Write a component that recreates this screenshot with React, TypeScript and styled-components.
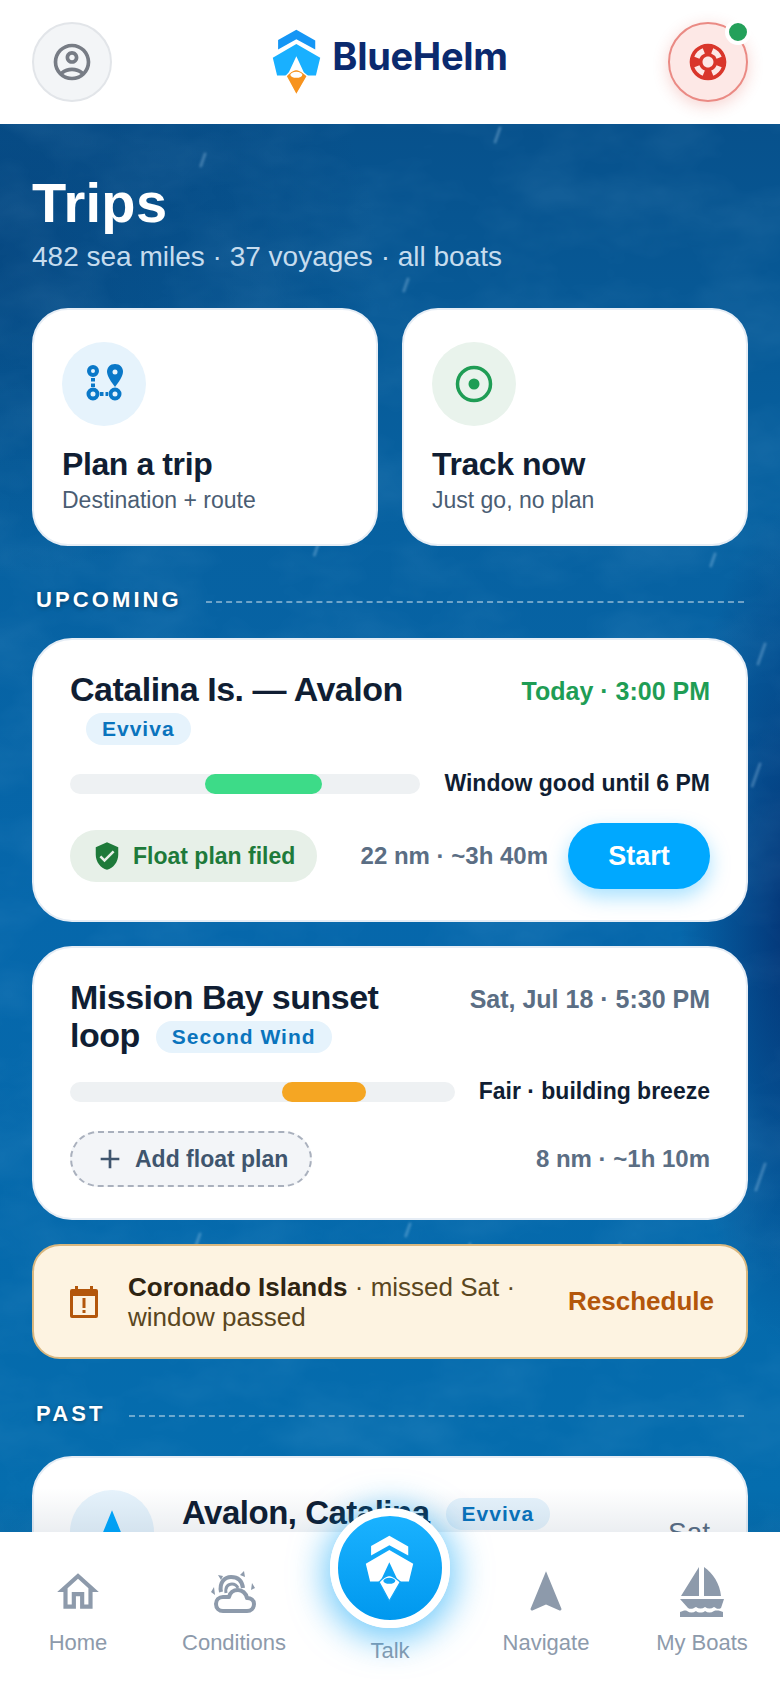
import styled, { createGlobalStyle } from "styled-components";
import {
  MdOutlineAccountCircle,
  MdSupport,
  MdVerifiedUser,
  MdOutlineHome,
  MdNavigation,
  MdAdd,
} from "react-icons/md";

const GlobalStyle = createGlobalStyle`
  * { box-sizing: border-box; }
  html, body { margin: 0; padding: 0; background: #06528f; }
  body { font-family: "Liberation Sans", Arial, sans-serif; }
`;

const Screen = styled.div`
  position: relative;
  width: 780px;
  height: 1688px;
  overflow: hidden;
  display: flex;
  flex-direction: column;
`;

const TopBar = styled.header`
  height: 124px;
  flex: none;
  background: #fff;
  display: flex;
  align-items: center;
  justify-content: space-between;
  padding: 0 32px;
  position: relative;
  z-index: 2;
`;

const RoundButton = styled.div<{ $sos?: boolean }>`
  position: relative;
  width: 80px;
  height: 80px;
  border-radius: 50%;
  display: flex;
  align-items: center;
  justify-content: center;
  font-size: 44px;
  color: ${(p) => (p.$sos ? "#d9362b" : "#777c85")};
  background: ${(p) => (p.$sos ? "#fde8e6" : "#f3f5f7")};
  border: 2px solid ${(p) => (p.$sos ? "#ea8a84" : "#e2e5e9")};
  box-shadow: ${(p) => (p.$sos ? "0 4px 16px rgba(217,54,43,.22)" : "none")};
`;

const OnlineDot = styled.span`
  position: absolute;
  top: -5px;
  right: -5px;
  width: 26px;
  height: 26px;
  border-radius: 50%;
  background: #23a05a;
  border: 4px solid #fff;
`;

const Brand = styled.div`
  display: flex;
  align-items: center;
  gap: 10px;
`;

const BrandName = styled.span`
  margin-bottom: 12px;
  font-family: Inter, "Liberation Sans", sans-serif;
  font-weight: 700;
  font-size: 38px;
  letter-spacing: -0.3px;
  color: #0b2a6e;
`;

const Scroll = styled.main`
  position: relative;
  flex: 1;
  min-height: 0;
  overflow: hidden;
  padding: 46px 32px 0;
  background:
    radial-gradient(ellipse 110px 420px at 790px 800px, rgba(3, 40, 105, 0.8), transparent),
    radial-gradient(ellipse 380px 320px at 0 130px, rgba(6, 60, 115, 0.5), transparent),
    linear-gradient(180deg, #07518c 0%, #07609f 22%, #0667ab 50%, #056aac 75%, #0570b0 100%);
`;

const Texture = styled.svg`
  position: absolute;
  inset: 0;
  width: 100%;
  height: 100%;
  pointer-events: none;
`;

const Content = styled.div`
  position: relative;
  display: flex;
  flex-direction: column;
`;

const PageTitle = styled.h1`
  margin: 0;
  font-size: 56px;
  line-height: 66px;
  font-weight: 700;
  letter-spacing: 0.3px;
  color: #fff;
`;

const PageSub = styled.p`
  margin: 2px 0 0;
  font-size: 28px;
  line-height: 38px;
  color: #c6dcee;
`;

const ActionGrid = styled.div`
  display: grid;
  grid-template-columns: 1fr 1fr;
  gap: 24px;
  margin-top: 32px;
`;

const ActionCard = styled.div`
  height: 238px;
  padding: 32px 28px;
  background: #fff;
  border: 2px solid #e6edf5;
  border-radius: 36px;
`;

const ActionIcon = styled.div<{ $tone: "blue" | "green" }>`
  width: 84px;
  height: 84px;
  border-radius: 50%;
  display: flex;
  align-items: center;
  justify-content: center;
  background: ${(p) => (p.$tone === "blue" ? "#e6f3fc" : "#e9f3ec")};
  color: ${(p) => (p.$tone === "blue" ? "#0a78c8" : "#1f9d55")};
`;

const ActionTitle = styled.div`
  margin-top: 18px;
  font-size: 32px;
  line-height: 40px;
  font-weight: 700;
  letter-spacing: -0.4px;
  color: #101e33;
`;

const ActionSub = styled.div`
  margin-top: 1px;
  font-size: 23px;
  line-height: 30px;
  color: #4a5d73;
`;

const SectionHead = styled.div<{ $top: number; $bottom: number }>`
  display: flex;
  align-items: center;
  gap: 24px;
  margin: ${(p) => p.$top}px 4px ${(p) => p.$bottom}px;
`;

const SectionLabel = styled.span`
  font-size: 22px;
  line-height: 32px;
  font-weight: 700;
  letter-spacing: 3.1px;
  color: #fff;
  text-shadow: 0 1px 4px rgba(0, 0, 0, 0.35);
`;

const SectionRule = styled.span`
  flex: 1;
  margin-top: 4px;
  border-top: 2px dashed rgba(255, 255, 255, 0.42);
`;

const TripCard = styled.article<{ $top?: number }>`
  margin-top: ${(p) => p.$top ?? 0}px;
  padding: 30px 36px 31px;
  background: #fff;
  border: 2px solid #e6edf5;
  border-radius: 40px;
`;

const TripHead = styled.div`
  display: flex;
  justify-content: space-between;
  align-items: flex-start;
  gap: 24px;
`;

const TripTitle = styled.h2`
  margin: 0;
  flex: 1;
  font-size: 34px;
  line-height: 38px;
  font-weight: 700;
  letter-spacing: -0.5px;
  color: #101e33;
`;

const PastTitle = styled(TripTitle)`
  font-size: 33px;
`;

const BoatTag = styled.span`
  display: inline-block;
  margin-left: 16px;
  padding: 0 16px;
  height: 32px;
  line-height: 32px;
  border-radius: 16px;
  background: #e6f3fc;
  color: #0a74bd;
  font-size: 21px;
  font-weight: 700;
  letter-spacing: 1px;
  vertical-align: 3px;
`;

const When = styled.div<{ $today?: boolean }>`
  flex: none;
  padding-top: 5px;
  font-size: 25px;
  line-height: 32px;
  font-weight: 700;
  color: ${(p) => (p.$today ? "#1f9d55" : "#5b6e84")};
`;

const WindowRow = styled.div`
  display: flex;
  align-items: center;
  gap: 24px;
  margin-top: 24px;
`;

const WindowTrack = styled.div`
  position: relative;
  flex: 1;
  height: 20px;
  border-radius: 10px;
  background: #eef1f3;
  overflow: hidden;
`;

const WindowFill = styled.div<{ $color: string }>`
  position: absolute;
  top: 0;
  bottom: 0;
  border-radius: 10px;
  background: ${(p) => p.$color};
`;

const WindowText = styled.span`
  flex: none;
  margin-top: -2px;
  font-size: 23px;
  line-height: 30px;
  font-weight: 700;
  color: #101e33;
`;

const TripFoot = styled.div`
  display: flex;
  align-items: center;
  margin-top: 25px;
`;

const FiledPill = styled.div`
  display: flex;
  align-items: center;
  gap: 11px;
  height: 52px;
  padding: 0 22px;
  border-radius: 26px;
  background: #e7f0e8;
  color: #1e7a3a;
  font-size: 23px;
  font-weight: 700;
  svg {
    font-size: 30px;
  }
`;

const AddPlan = styled.div`
  display: flex;
  align-items: center;
  gap: 9px;
  height: 56px;
  padding: 0 22px;
  border-radius: 28px;
  border: 2px dashed #a9b0bd;
  background: #f3f5f8;
  color: #3f556e;
  font-size: 23px;
  font-weight: 700;
  svg {
    font-size: 32px;
  }
`;

const Distance = styled.span`
  margin-left: auto;
  font-size: 24px;
  font-weight: 700;
  color: #5b6e84;
`;

const StartButton = styled.div`
  flex: none;
  margin-left: 20px;
  width: 142px;
  height: 66px;
  border-radius: 33px;
  display: flex;
  align-items: center;
  justify-content: center;
  background: #00a8ff;
  color: #fff;
  font-size: 27px;
  font-weight: 700;
  box-shadow: 0 8px 20px rgba(0, 168, 255, 0.35);
`;

const MissedBanner = styled.div`
  display: flex;
  align-items: center;
  margin-top: 24px;
  height: 115px;
  padding: 0 32px 0 36px;
  background: #fdf3e1;
  border: 2px solid #d9b77f;
  border-radius: 28px;
`;

const MissedText = styled.div`
  flex: 1;
  margin-left: 30px;
  padding-right: 30px;
  font-size: 26px;
  line-height: 30px;
  color: #5a4620;
  b {
    color: #2e2412;
  }
`;

const MissedAction = styled.span`
  font-size: 26px;
  font-weight: 700;
  color: #b3560b;
`;

const PastCard = styled.article`
  display: flex;
  gap: 28px;
  padding: 32px 36px;
  height: 300px;
  background: #fff;
  border: 2px solid #e6edf5;
  border-radius: 40px;
`;

const PastIcon = styled.div`
  flex: none;
  width: 84px;
  height: 84px;
  border-radius: 50%;
  background: #e6f3fc;
  display: flex;
  align-items: center;
  justify-content: center;
  font-size: 52px;
  color: #00a8ff;
`;

const PastBody = styled.div`
  flex: 1;
  padding-top: 4px;
`;

const PastDate = styled.span`
  flex: none;
  padding-top: 27px;
  font-size: 28px;
  line-height: 32px;
  color: #5b6e84;
`;

const BottomNav = styled.nav`
  position: absolute;
  left: 0;
  right: 0;
  bottom: 0;
  height: 156px;
  z-index: 3;
  display: grid;
  grid-template-columns: repeat(5, 1fr);
  background: #fff;
  &::before {
    content: "";
    position: absolute;
    left: 0;
    right: 0;
    top: -44px;
    height: 44px;
    background: linear-gradient(180deg, transparent, rgba(0, 40, 80, 0.08));
    pointer-events: none;
  }
`;

const NavItem = styled.div`
  display: flex;
  flex-direction: column;
  align-items: center;
  padding-top: 32px;
  color: #8d9aab;
`;

const NavIconSlot = styled.div`
  height: 56px;
  display: flex;
  align-items: center;
  justify-content: center;
  font-size: 50px;
`;

const NavLabel = styled.span`
  margin-top: 8px;
  font-size: 22px;
  line-height: 30px;
  white-space: nowrap;
`;

const TalkLabel = styled(NavLabel)`
  margin-top: 72px;
`;

const TalkButton = styled.div`
  position: absolute;
  left: 50%;
  top: -24px;
  transform: translateX(-50%);
  width: 120px;
  height: 120px;
  border-radius: 50%;
  border: 8px solid #fff;
  background: linear-gradient(180deg, #1ab2ff, #0098ee);
  box-shadow: 0 6px 34px 6px rgba(0, 160, 245, 0.55);
  display: flex;
  align-items: center;
  justify-content: center;
`;

function LogoMark({ top, body, pin, eye }: { top: string; body: string; pin: string; eye: string }) {
  return (
    <svg width="50" height="68" viewBox="40 40 150 205">
      <path d="M58 76 113 45l57 33v27l-57-31-55 31z" fill={top} />
      <path d="M113 88l72 42-13 53h-32l-27-58-27 58H55l-13-53z" fill={body} />
      <path d="M82 185c9-10 20-18 31-20 11 2 22 10 33 20l-33 57z" fill={pin} stroke={eye} strokeWidth="4" />
      <ellipse cx="113" cy="181" rx="18" ry="9" fill={eye} />
    </svg>
  );
}

function RouteIcon() {
  return (
    <svg width="44" height="44" viewBox="0 0 44 44" fill="none" stroke="currentColor">
      <circle cx="11" cy="9" r="4" strokeWidth="4" />
      <path d="M11 16v9" strokeWidth="4" strokeDasharray="3.5 2" />
      <circle cx="11" cy="32" r="4.5" strokeWidth="4" />
      <path d="M18 32h8" strokeWidth="4" strokeDasharray="3.5 2" />
      <circle cx="33" cy="32" r="4.5" strokeWidth="4" />
      <path
        d="M33 2c-5 0-8 3.500-8 8 0 5 8 15 8 15s8-10 8-15c0-4.500-3-8-8-8z"
        fill="currentColor"
        stroke="none"
      />
      <circle cx="33" cy="10" r="2.500" fill="#e6f3fc" stroke="none" />
    </svg>
  );
}

function TrackIcon() {
  return (
    <svg width="44" height="44" viewBox="0 0 44 44">
      <circle cx="22" cy="22" r="16.500" fill="none" stroke="currentColor" strokeWidth="3.500" />
      <circle cx="22" cy="22" r="5.500" fill="currentColor" />
    </svg>
  );
}

function MissedIcon() {
  return (
    <svg width="28" height="32" viewBox="0 0 28 32">
      <path
        fillRule="evenodd"
        d="M5 0h3v3h12V0h3v3h3a2 2 0 0 1 2 2v25a2 2 0 0 1-2 2H2a2 2 0 0 1-2-2V5a2 2 0 0 1 2-2h3zM3 10v19h22V10z"
        fill="#b3560b"
      />
      <path d="M12.500 12h3v10h-3zM12.500 24h3v3h-3z" fill="#b3560b" />
    </svg>
  );
}

function ConditionsIcon() {
  return (
    <svg width="46" height="46" viewBox="0 0 46 46" fill="none" stroke="currentColor" strokeWidth="4">
      <path d="M10 23c-2-10 4-15 10-15s11 3 12 11" />
      <path d="M15 24c-1-6 2-9 6-9 3 0 5 2 6 4" strokeWidth="3" />
      <path
        d="M12 42h24c4 0 7-3 7-7s-3-6-7-6c-1-5-5-8-9-8-5 0-8 3-9 7h-6c-4 0-7 3-7 7s3 7 7 7z"
        strokeLinejoin="round"
      />
      <path d="M7 6l5 1-2 4zM33 2l1 6-5-2zM3 18l-3 5 4 3zM41 14l3 5-4 2z" fill="currentColor" stroke="none" />
    </svg>
  );
}

function BoatIcon() {
  return (
    <svg width="46" height="50" viewBox="0 0 46 50" fill="currentColor">
      <path d="M20 0v29H2zM25 0c9 6 16 17 17 29H25z" />
      <path d="M1 32h44l-3 9c-3 2-5 0-7-1-3 2-6 2-9 0-3 2-6 2-9 0-2 1-5 3-8 1z" />
      <path d="M1 45c3-1 5-2 7-1 3 2 6 2 9 0 2 2 7 2 9 0 3 2 6 2 9 0 3-1 7 0 9 1v5H1z" />
    </svg>
  );
}

// speckle and a few glints over the gradient, the photo in the reference
const streaks = [
  [500, 4, 14], [205, 30, 12], [408, 155, 12], [650, 270, 12], [740, 280, 10],
  [160, 390, 14], [320, 415, 16], [545, 395, 10], [715, 430, 12],
  [765, 520, 20], [760, 640, 22], [200, 1110, 18], [410, 1100, 12],
  [620, 1120, 20], [765, 1040, 26], [470, 1120, 14], [200, 1150, 14], [570, 1170, 18],
  [300, 1185, 12], [110, 1140, 12], [680, 1190, 16], [735, 1140, 22],
];

function OceanTexture() {
  return (
    <Texture>
      <filter id="ocean-noise">
        <feTurbulence type="fractalNoise" baseFrequency="0.01 0.018" numOctaves="4" seed="7" />
        <feColorMatrix values="0 0 0 0 0.45  0 0 0 0 0.75  0 0 0 0 1  0 0 0 0.9 -0.32" />
      </filter>
      <filter id="glint-blur">
        <feGaussianBlur stdDeviation="1.2" />
      </filter>
      <rect width="100%" height="100%" filter="url(#ocean-noise)" opacity="0.16" />
      <g filter="url(#glint-blur)">
        {streaks.map(([x, y, len]) => (
          <line
            key={`${x}-${y}`}
            x1={x}
            y1={y}
            x2={x - len * 0.35}
            y2={y + len}
            stroke="#bfe3fb"
            strokeOpacity="0.28"
            strokeWidth="3"
            strokeLinecap="round"
          />
        ))}
      </g>
    </Texture>
  );
}

export default function App() {
  return (
    <Screen>
      <GlobalStyle />
      <TopBar>
        <RoundButton>
          <MdOutlineAccountCircle />
        </RoundButton>
        <Brand>
          <LogoMark top="#1596f5" body="#19b0ff" pin="#f7931e" eye="#fff" />
          <BrandName>BlueHelm</BrandName>
        </Brand>
        <RoundButton $sos>
          <MdSupport />
          <OnlineDot />
        </RoundButton>
      </TopBar>

      <Scroll>
        <OceanTexture />
        <Content>
          <PageTitle>Trips</PageTitle>
          <PageSub>482 sea miles · 37 voyages · all boats</PageSub>

          <ActionGrid>
            <ActionCard>
              <ActionIcon $tone="blue">
                <RouteIcon />
              </ActionIcon>
              <ActionTitle>Plan a trip</ActionTitle>
              <ActionSub>Destination + route</ActionSub>
            </ActionCard>
            <ActionCard>
              <ActionIcon $tone="green">
                <TrackIcon />
              </ActionIcon>
              <ActionTitle>Track now</ActionTitle>
              <ActionSub>Just go, no plan</ActionSub>
            </ActionCard>
          </ActionGrid>

          <SectionHead $top={38} $bottom={22}>
            <SectionLabel>UPCOMING</SectionLabel>
            <SectionRule />
          </SectionHead>

          <TripCard>
            <TripHead>
              <TripTitle>
                Catalina Is. — Avalon<BoatTag>Evviva</BoatTag>
              </TripTitle>
              <When $today>Today · 3:00 PM</When>
            </TripHead>
            <WindowRow>
              <WindowTrack>
                <WindowFill $color="#3ddb88" style={{ left: "38.5%", width: "33.5%" }} />
              </WindowTrack>
              <WindowText>Window good until 6 PM</WindowText>
            </WindowRow>
            <TripFoot>
              <FiledPill>
                <MdVerifiedUser />
                Float plan filed
              </FiledPill>
              <Distance>22 nm · ~3h 40m</Distance>
              <StartButton>Start</StartButton>
            </TripFoot>
          </TripCard>

          <TripCard $top={24}>
            <TripHead>
              <TripTitle>
                Mission Bay sunset loop<BoatTag>Second Wind</BoatTag>
              </TripTitle>
              <When>Sat, Jul 18 · 5:30 PM</When>
            </TripHead>
            <WindowRow>
              <WindowTrack>
                <WindowFill $color="#f5a623" style={{ left: "55%", width: "22%" }} />
              </WindowTrack>
              <WindowText>Fair · building breeze</WindowText>
            </WindowRow>
            <TripFoot>
              <AddPlan>
                <MdAdd />
                Add float plan
              </AddPlan>
              <Distance>8 nm · ~1h 10m</Distance>
            </TripFoot>
          </TripCard>

          <MissedBanner>
            <MissedIcon />
            <MissedText>
              <b>Coronado Islands</b> · missed Sat · window passed
            </MissedText>
            <MissedAction>Reschedule</MissedAction>
          </MissedBanner>

          <SectionHead $top={39} $bottom={26}>
            <SectionLabel>PAST</SectionLabel>
            <SectionRule />
          </SectionHead>

          <PastCard>
            <PastIcon>
              <MdNavigation />
            </PastIcon>
            <PastBody>
              <PastTitle>
                Avalon, Catalina<BoatTag>Evviva</BoatTag>
              </PastTitle>
            </PastBody>
            <PastDate>Sat</PastDate>
          </PastCard>
        </Content>
      </Scroll>

      <BottomNav>
        <NavItem>
          <NavIconSlot>
            <MdOutlineHome />
          </NavIconSlot>
          <NavLabel>Home</NavLabel>
        </NavItem>
        <NavItem>
          <NavIconSlot>
            <ConditionsIcon />
          </NavIconSlot>
          <NavLabel>Conditions</NavLabel>
        </NavItem>
        <NavItem>
          <TalkButton>
            <LogoMark top="#fff" body="#fff" pin="#fff" eye="#12a5f6" />
          </TalkButton>
          <TalkLabel>Talk</TalkLabel>
        </NavItem>
        <NavItem>
          <NavIconSlot>
            <MdNavigation />
          </NavIconSlot>
          <NavLabel>Navigate</NavLabel>
        </NavItem>
        <NavItem>
          <NavIconSlot>
            <BoatIcon />
          </NavIconSlot>
          <NavLabel>My Boats</NavLabel>
        </NavItem>
      </BottomNav>
    </Screen>
  );
}
